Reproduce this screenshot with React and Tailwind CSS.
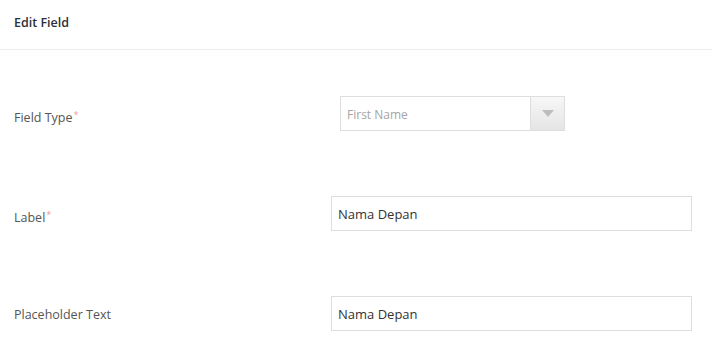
import React from "react";

const Label = ({ children, required }) => (
  <div className={`w-[317px] text-[12.5px] text-[#555] ${required ? "pt-[11px]" : "pt-[4px]"}`}>
    {children}
    {required && <sup className="text-[#f29a9a] text-[9px] ml-[1px]">*</sup>}
  </div>
);

export default function App() {
  return (
    <div className="w-[712px] h-[359px] bg-white overflow-hidden" style={{ fontFamily: '"Open Sans", "Liberation Sans", sans-serif' }}>
      <div className="h-[50px] px-[14px] flex items-center pb-[3px] border-b border-[#ececec]">
        <h1 className="text-[12.5px] font-semibold text-[#2d3039]">Edit Field</h1>
      </div>

      <div className="pt-[13px] px-[14px]">
        {/* field type */}
        <div className="h-[100px] flex items-center">
          <Label required>Field Type</Label>
          <div className="ml-[9px] w-[225px] h-[35px] flex border border-[#dedede] bg-white">
            <div className="flex-1 flex items-center px-[6px] pt-[3px] text-[12px] text-[#a5a5a5]">First Name</div>
            <div className="w-[34px] border-l border-[#dedede] bg-gradient-to-b from-[#f7f7f7] to-[#e5e5e5] flex items-center justify-center">
              <svg width="12" height="7" viewBox="0 0 12 7">
                <path d="M0 0h12L6 7z" fill="#bdbdbd" />
              </svg>
            </div>
          </div>
        </div>

        {/* label */}
        <div className="h-[100px] flex items-center">
          <Label required>Label</Label>
          <input
            readOnly
            value="Nama Depan"
            className="w-[361px] h-[35px] border border-[#dedede] px-[6px] pt-[2px] text-[13px] text-[#333] outline-none"
          />
        </div>

        {/* placeholder */}
        <div className="h-[100px] flex items-center">
          <Label>Placeholder Text</Label>
          <input
            readOnly
            value="Nama Depan"
            className="w-[361px] h-[35px] border border-[#dedede] px-[6px] pt-[2px] text-[13px] text-[#333] outline-none"
          />
        </div>
      </div>
    </div>
  );
}
